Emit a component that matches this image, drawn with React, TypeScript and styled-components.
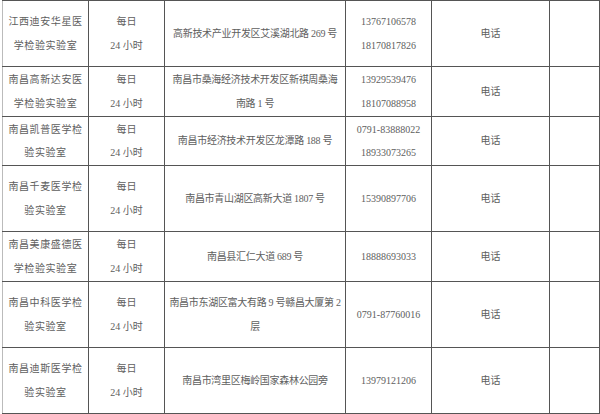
import React from "react";
import styled, { createGlobalStyle } from "styled-components";

const GlobalStyle = createGlobalStyle`
  html, body {
    margin: 0;
    padding: 0;
    background: #fff;
  }
`;

type Row = {
  name: string[];
  address: string[];
  phones: string[];
  height: number;
};

const columns = [86, 76, 181, 86, 118, 50];

const rows: Row[] = [
  {
    name: ["江西迪安华星医", "学检验实验室"],
    address: ["高新技术产业开发区艾溪湖北路 269 号"],
    phones: ["13767106578", "18170817826"],
    height: 66,
  },
  {
    name: ["南昌高新达安医", "学检验实验室"],
    address: ["南昌市桑海经济技术开发区新祺周桑海", "南路 1 号"],
    phones: ["13929539476", "18107088958"],
    height: 50,
  },
  {
    name: ["南昌凯普医学检", "验实验室"],
    address: ["南昌市经济技术开发区龙潭路 188 号"],
    phones: ["0791-83888022", "18933073265"],
    height: 49,
  },
  {
    name: ["南昌千麦医学检", "验实验室"],
    address: ["南昌市青山湖区高新大道 1807 号"],
    phones: ["15390897706"],
    height: 66,
  },
  {
    name: ["南昌美康盛德医", "学检验实验室"],
    address: ["南昌县汇仁大道 689 号"],
    phones: ["18888693033"],
    height: 50,
  },
  {
    name: ["南昌中科医学检", "验实验室"],
    address: ["南昌市东湖区富大有路 9 号赣昌大厦第 2", "层"],
    phones: ["0791-87760016"],
    height: 66,
  },
  {
    name: ["南昌迪斯医学检", "验实验室"],
    address: ["南昌市湾里区梅岭国家森林公园旁"],
    phones: ["13979121206"],
    height: 66,
  },
];

const Page = styled.div`
  padding-left: 2px;
  width: 597px;
`;

const Table = styled.table`
  width: 597px;
  border-collapse: collapse;
  table-layout: fixed;
  font-family: "Liberation Serif", "Noto Sans CJK SC", serif;
  font-size: 10px;
  color: #5e5e5e;
  border-left: 1px solid #bbb;
`;

const Col = styled.col<{ $w: number }>`
  width: ${(p) => p.$w}px;
`;

const Tr = styled.tr<{ $h: number }>`
  height: ${(p) => p.$h}px;
`;

const Td = styled.td<{ $spacing?: number }>`
  border: 1px solid #555;
  padding: 0;
  text-align: center;
  vertical-align: middle;
  line-height: 23.5px;
  letter-spacing: ${(p) => p.$spacing ?? 0}px;
  white-space: nowrap;

  &:first-child {
    border-left-color: #bbb;
  }
`;

const Line = styled.div``;

function Lines({ items }: { items: string[] }) {
  return (
    <>
      {items.map((t, i) => (
        <Line key={i}>{t}</Line>
      ))}
    </>
  );
}

export default function App() {
  return (
    <Page>
      <GlobalStyle />
      <Table>
        <colgroup>
          {columns.map((w, i) => (
            <Col key={i} $w={w} />
          ))}
        </colgroup>
        <tbody>
          {rows.map((r, i) => (
            <Tr key={i} $h={r.height}>
              <Td $spacing={0.6}>
                <Lines items={r.name} />
              </Td>
              <Td>
                <Lines items={["每日", "24 小时"]} />
              </Td>
              <Td $spacing={-0.3}>
                <Lines items={r.address} />
              </Td>
              <Td>
                <Lines items={r.phones} />
              </Td>
              <Td>电话</Td>
              <Td />
            </Tr>
          ))}
        </tbody>
      </Table>
    </Page>
  );
}
